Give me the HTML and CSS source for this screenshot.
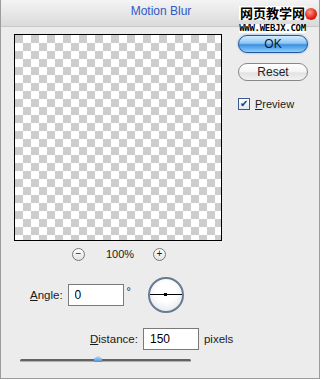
FILE: index.html
```html
<!DOCTYPE html>
<html lang="en">
<head>
  <meta charset="UTF-8">
  <title>Motion Blur</title>
  <link rel="stylesheet" href="styles.css">
</head>
<body>
  <div class="dialog">
    <div class="titlebar">
      <span class="title">Motion Blur</span>
      <div class="watermark">
        <span class="wm-cn">网页教学网</span>
        <span class="wm-url">WWW.WEBJX.COM</span>
      </div>
      <span class="close"></span>
    </div>

    <div class="content">
      <div class="left">
        <div class="preview"></div>

        <div class="zoom">
          <span class="zbtn">&minus;</span>
          <span class="zlabel">100%</span>
          <span class="zbtn">+</span>
        </div>

        <div class="angle-row">
          <label><u>A</u>ngle:</label>
          <input type="text" value="0" class="field">
          <span class="deg">&deg;</span>
          <div class="dial"><span class="dot"></span></div>
        </div>

        <div class="distance-row">
          <label><u>D</u>istance:</label>
          <input type="text" value="150" class="field">
          <span class="unit">pixels</span>
        </div>

        <div class="slider"><span class="thumb"></span></div>
      </div>

      <div class="right">
        <button class="btn ok">OK</button>
        <button class="btn reset">Reset</button>
        <label class="check"><span class="box">&#10004;</span><span><u>P</u>review</span></label>
      </div>
    </div>
  </div>
</body>
</html>
```

FILE: styles.css
```css
body {
  margin: 0;
  font-family: 'Liberation Sans', Arial, sans-serif;
  font-size: 11.5px;
  color: #1a1a1a;
  background: #fff;
}
.dialog {
  width: 320px;
  height: 379px;
  box-sizing: border-box;
  background: #ececec;
  border: 1px solid #9c9c9c;
  border-top: none;
  position: relative;
}
.titlebar {
  height: 26px;
  background: linear-gradient(#f4f4f4, #dadada);
  border-bottom: 1px solid #c8c8c8;
  display: flex;
  justify-content: center;
  align-items: center;
  position: relative;
}
.title {
  color: #3358c8;
  font-size: 12px;
  margin: 0 0 4px 2px;
}
.watermark {
  position: absolute;
  left: 238px;
  top: 6px;
  display: flex;
  flex-direction: column;
  align-items: center;
}
.wm-cn {
  font-family: 'Noto Sans CJK SC', sans-serif;
  font-size: 13px;
  line-height: 14px;
  font-weight: bold;
  color: #000;
  background: #fff;
  padding: 0 1px;
}
.wm-url {
  font-family: 'DejaVu Sans Mono', monospace;
  font-weight: bold;
  font-size: 9px;
  line-height: 9px;
  color: #000;
  background: #fff;
  margin-top: 4px;
  letter-spacing: -0.3px;
}
.close {
  position: absolute;
  left: 304px;
  top: 8px;
  width: 12px;
  height: 12px;
  border-radius: 50%;
  background: radial-gradient(circle at 40% 35%, #ff9a8a, #e02010 60%, #a00800);
}
.content {
  display: flex;
  padding: 7px 0 0 13px;
}
.left {
  width: 208px;
  white-space: nowrap;
}
.preview {
  width: 206px;
  height: 205px;
  border: 1px solid #000;
  background-color: #fff;
  background-image: conic-gradient(#fff 25%, #cdcdcd 0 50%, #fff 0 75%, #cdcdcd 0);
  background-size: 16px 16px;
}
.zoom {
  display: flex;
  align-items: center;
  margin: 6px 0 0 58px;
  height: 14px;
  gap: 21px;
  font-size: 11px;
}
.zlabel {
  width: 26px;
}
.zbtn {
  width: 11px;
  height: 11px;
  border: 1px solid #777;
  border-radius: 50%;
  background: linear-gradient(#fff, #e2e2e2);
  display: flex;
  align-items: center;
  justify-content: center;
  font-size: 10px;
  line-height: 1;
}
.angle-row, .distance-row {
  display: flex;
  align-items: center;
}
.angle-row {
  margin: 16px 0 0 16px;
  height: 36px;
}
.field {
  font-family: inherit;
  font-size: 12px;
  width: 56px;
  height: 22px;
  box-sizing: border-box;
  border: 1px solid #7a7a7a;
  padding: 0 6px;
  margin-left: 5px;
  background: #fff;
  outline: none;
}
.deg {
  margin: -8px 0 0 3px;
  font-size: 11px;
}
.dial {
  width: 32px;
  height: 32px;
  margin-left: 17px;
  border: 2px solid #687b92;
  border-radius: 50%;
  background: radial-gradient(circle at 50% 40%, #fff 40%, #d8dee6);
  position: relative;
}
.dial::before {
  content: "";
  position: absolute;
  left: 0;
  right: 0;
  top: 15px;
  height: 1px;
  background: #000;
}
.dot {
  position: absolute;
  left: 14px;
  top: 14px;
  width: 3px;
  height: 3px;
  background: #000;
}
.distance-row {
  margin: 15px 0 0 76px;
  height: 22px;
}
.unit {
  margin-left: 5px;
}
.slider {
  width: 171px;
  height: 2px;
  margin: 9px 0 0 6px;
  background: #626262;
  border-bottom: 1px solid #b0b0b0;
  border-radius: 2px;
  position: relative;
}
.thumb {
  position: absolute;
  left: 74px;
  top: -3px;
  width: 8px;
  height: 6px;
  background: linear-gradient(#b8dcf8, #4a90d8);
  clip-path: polygon(50% 0, 100% 40%, 100% 100%, 0 100%, 0 40%);
}
.right {
  display: flex;
  flex-direction: column;
  margin-left: 16px;
  padding-top: 1px;
}
.btn {
  width: 70px;
  height: 18px;
  border-radius: 9px;
  font-family: inherit;
  font-size: 12px;
  padding: 0;
  cursor: pointer;
}
.ok {
  border: 1px solid #23589a;
  color: #0a1a30;
  background: linear-gradient(#d6ecfd, #8cc6f4 45%, #3d8fe0 55%, #8ed0fa);
  box-shadow: 0 0 2px #5aa0e0;
}
.reset {
  margin-top: 10px;
  border: 1px solid #888;
  color: #222;
  background: linear-gradient(#fff, #f4f4f4 50%, #e2e2e2 55%, #f2f2f2);
}
.check {
  display: flex;
  align-items: center;
  margin-top: 17px;
  gap: 5px;
  font-size: 11px;
}
.box {
  width: 10px;
  height: 10px;
  border: 1px solid #3a5a90;
  background: linear-gradient(#fff, #dfe8f4);
  color: #1a3a80;
  font-size: 10px;
  line-height: 10px;
  text-align: center;
}
```
